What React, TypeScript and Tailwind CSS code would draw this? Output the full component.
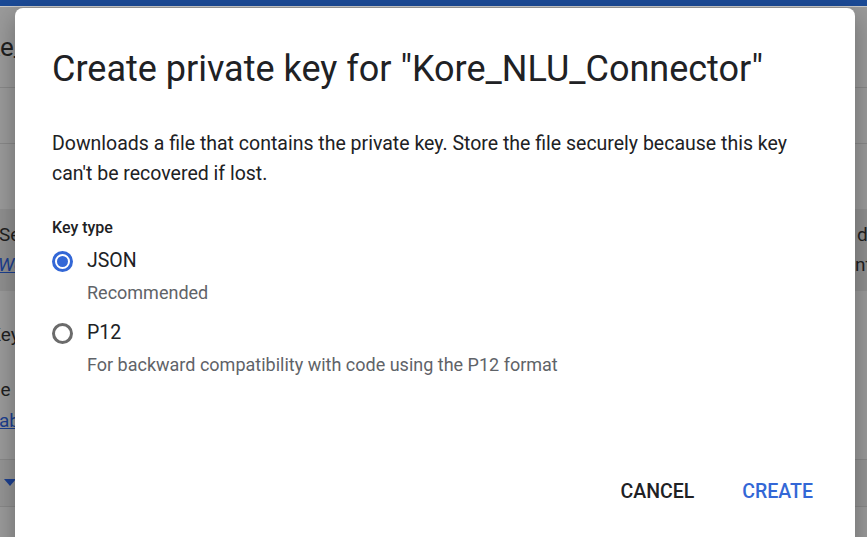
import React from 'react';

const font = { fontFamily: 'Roboto, "Noto Sans", sans-serif' };

function Radio({ checked }: { checked: boolean }) {
  return (
    <span
      className={`flex h-[21px] w-[21px] shrink-0 items-center justify-center rounded-full border-[3px] ${
        checked ? 'border-[#3367d6]' : 'border-[#6b6b6b]'
      }`}
    >
      {checked && <span className="h-[11px] w-[11px] rounded-full bg-[#3367d6]" />}
    </span>
  );
}

function Background() {
  return (
    <div className="flex h-full w-full flex-col overflow-hidden bg-[#9a9a9a] text-[#1f1f1f]">
      <div className="h-[6px] shrink-0 bg-[#1b4a96]" />
      <div className="h-[1px] shrink-0 bg-[#c9c9c9]" />
      {/* page title row */}
      <div className="flex h-[81px] shrink-0 items-center border-b border-[#888]">
        <span className="-ml-[13px] text-[26px] leading-none">ke_NLU</span>
      </div>
      <div className="h-[56px] shrink-0 border-b border-[#888]" />
      <div className="h-[65px] shrink-0" />
      {/* info band */}
      <div className="flex h-[82px] shrink-0 flex-col justify-center gap-[6px] bg-[#8f8f8f] text-[19px] leading-[24px]">
        <div className="flex justify-between">
          <span className="-ml-[1px]">Service account</span>
          <span className="w-[10px] overflow-hidden">dd</span>
        </div>
        <div className="flex justify-between">
          <span className="-ml-[2px] italic text-[#1c3f8f] underline">Workload</span>
          <span className="w-[12px] overflow-hidden">nt</span>
        </div>
      </div>
      <div className="flex h-[56px] shrink-0 items-end">
        <span className="-ml-[11px] text-[19px] leading-[24px]">Keys</span>
      </div>
      <div className="flex h-[55px] shrink-0 items-end">
        <span className="-ml-[10px] text-[19px] leading-[24px]">ne</span>
      </div>
      <div className="flex h-[31px] shrink-0 items-end">
        <span className="-ml-[1px] text-[19px] leading-[24px] text-[#1c3f8f] underline">able</span>
      </div>
      <div className="mt-[26px] flex h-[48px] shrink-0 items-center border-y border-[#888] bg-[#949494]">
        <svg width="12" height="8" viewBox="0 0 12 8" className="ml-[4px]">
          <path d="M0 0 L12 0 L6 7 Z" fill="#1c3f8f" />
        </svg>
      </div>
      <div className="flex-1 bg-[#9a9a9a]" />
    </div>
  );
}

export default function App() {
  return (
    <div className="relative h-[537px] w-[867px] overflow-hidden" style={font}>
      <Background />

      {/* Dialog */}
      <div className="absolute left-[15px] top-[8px] flex h-[600px] w-[840px] flex-col rounded-[8px] bg-white px-[37px] pt-[39px] shadow-[0_8px_24px_rgba(0,0,0,0.3)]">
        <h1 className="text-[36px] font-normal leading-[44px] text-[#202124]">
          Create private key for "Kore_NLU_Connector"
        </h1>

        <p className="mt-[38px] w-[750px] text-[19.5px] leading-[30px] text-[#202124]">
          Downloads a file that contains the private key. Store the file securely because this key can't be
          recovered if lost.
        </p>

        <div className="mt-[29px] text-[16px] font-medium leading-[20px] text-[#202124]">Key type</div>

        <label className="mt-[8px] flex h-[30px] items-center gap-[14px]">
          <Radio checked />
          <span className="text-[19.5px] text-[#202124]">JSON</span>
        </label>
        <div className="mt-[4px] pl-[35px] text-[18px] leading-[26px] text-[#5f6368]">Recommended</div>

        <label className="mt-[12px] flex h-[30px] items-center gap-[14px]">
          <Radio checked={false} />
          <span className="text-[19.5px] text-[#202124]">P12</span>
        </label>
        <div className="mt-[4px] pl-[35px] text-[18px] leading-[26px] text-[#5f6368]">
          For backward compatibility with code using the P12 format
        </div>

        <div className="mt-[96px] -mr-[7px] flex justify-end gap-[24px]">
          <button className="h-[36px] px-[12px] text-[19.5px] font-medium text-[#202124]">CANCEL</button>
          <button className="h-[36px] px-[12px] text-[19.5px] font-medium text-[#3367d6]">CREATE</button>
        </div>
      </div>
    </div>
  );
}
